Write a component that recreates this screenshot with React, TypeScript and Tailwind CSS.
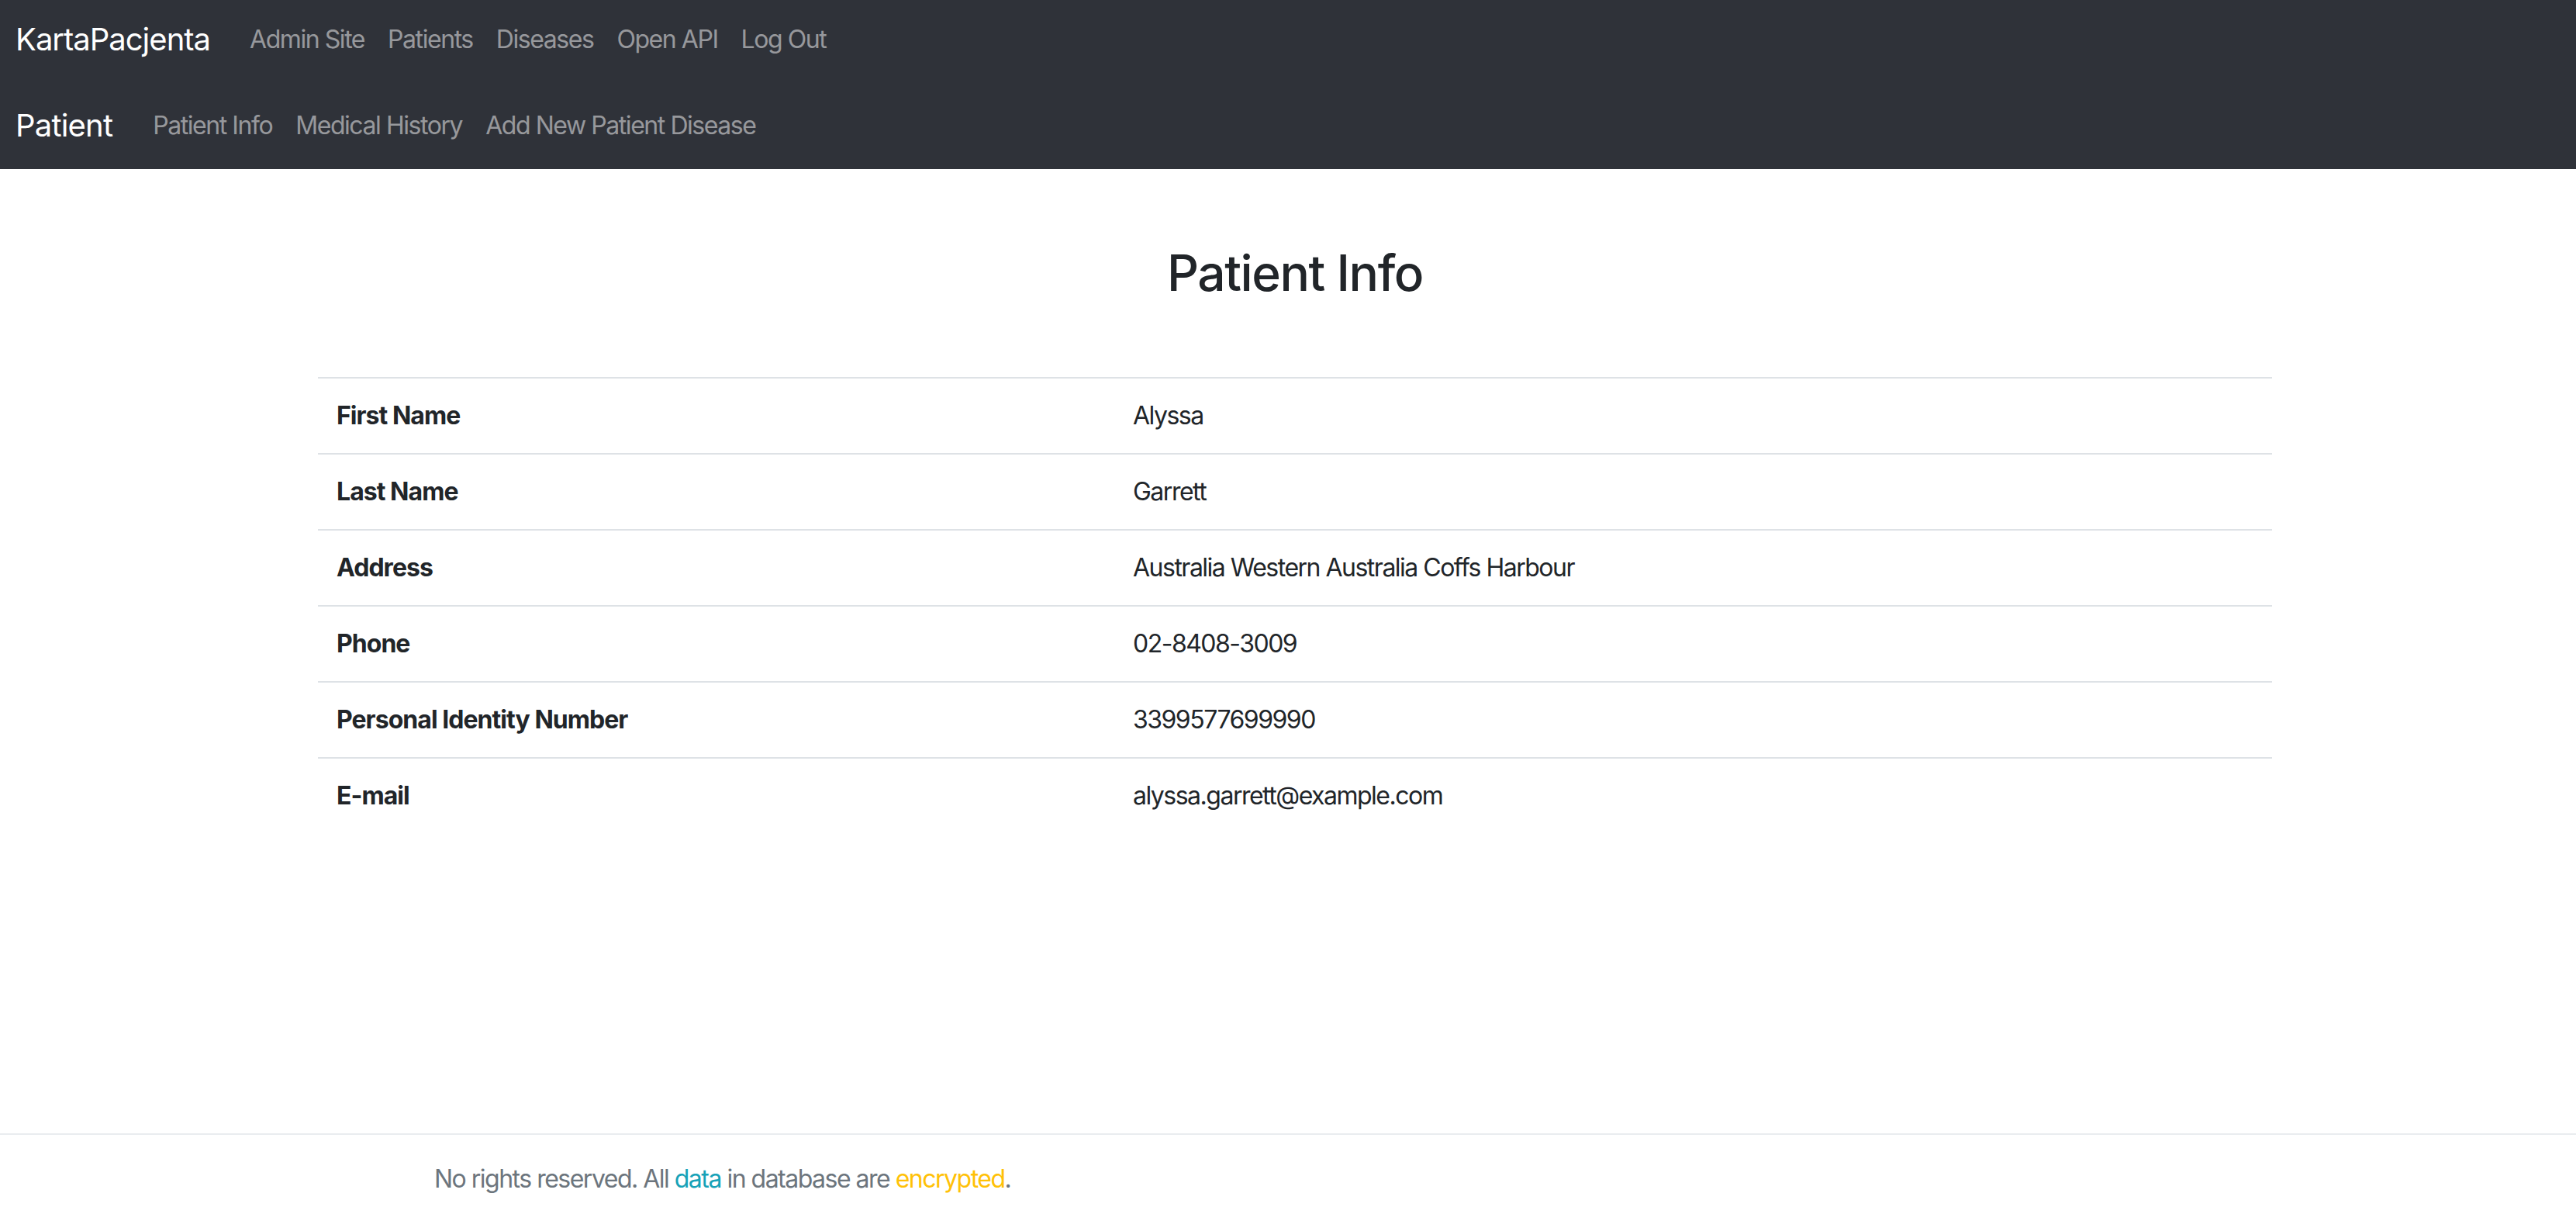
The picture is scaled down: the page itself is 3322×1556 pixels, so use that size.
import React from "react";

const rows: [string, string][] = [
  ["First Name", "Alyssa"],
  ["Last Name", "Garrett"],
  ["Address", "Australia Western Australia Coffs Harbour"],
  ["Phone", "02-8408-3009"],
  ["Personal Identity Number", "3399577699990"],
  ["E-mail", "alyssa.garrett@example.com"],
];

const topLinks = ["Admin Site", "Patients", "Diseases", "Open API", "Log Out"];
const patientLinks = ["Patient Info", "Medical History", "Add New Patient Disease"];

const App = () => {
  return (
    <div className="min-h-screen flex flex-col bg-white font-['Inter','Noto_Sans',sans-serif] text-[#212529]">
      <nav className="bg-[#2f3239]">
        <div className="h-[102px] flex items-center pl-[20px]">
          <span className="text-[40px] text-white mr-[36px] leading-none tracking-[-0.025em]">KartaPacjenta</span>
          {topLinks.map((l) => (
            <a key={l} className="px-[15px] text-[32px] text-white/50 leading-none tracking-[-0.045em]">
              {l}
            </a>
          ))}
        </div>
        <div className="h-[116px] pt-[4px] flex items-center pl-[20px]">
          <span className="text-[40px] text-white mr-[37px] leading-none tracking-[-0.02em]">Patient</span>
          {patientLinks.map((l) => (
            <a key={l} className="px-[15px] text-[32px] text-white/50 leading-none tracking-[-0.045em]">
              {l}
            </a>
          ))}
        </div>
      </nav>

      <main className="ml-[410px] w-[2520px]">
        <h2 className="mt-[96px] mb-[95px] text-center text-[64px] font-medium leading-[1.2] tracking-[-0.022em]">
          Patient Info
        </h2>
        <div className="flex flex-col">
          {rows.map(([k, v]) => (
            <div key={k} className="flex h-[98px] items-center border-t-2 border-[#dee2e6] text-[32px]">
              <div className="w-[1027px] pl-6 font-bold tracking-[-0.03em]">{k}</div>
              <div className="pl-6 tracking-[-0.047em]">{v}</div>
            </div>
          ))}
        </div>
      </main>

      <footer className="mt-auto h-[95px] pt-[20px] border-t-2 border-[#e9ecef] flex items-center pl-[560px] text-[32px] text-[#6c757d] tracking-[-0.047em]">
        <span>
          No rights reserved. All <span className="text-[#17a2b8]">data</span> in database are{" "}
          <span className="text-[#ffc107]">encrypted</span>.
        </span>
      </footer>
    </div>
  );
};

export default App;
